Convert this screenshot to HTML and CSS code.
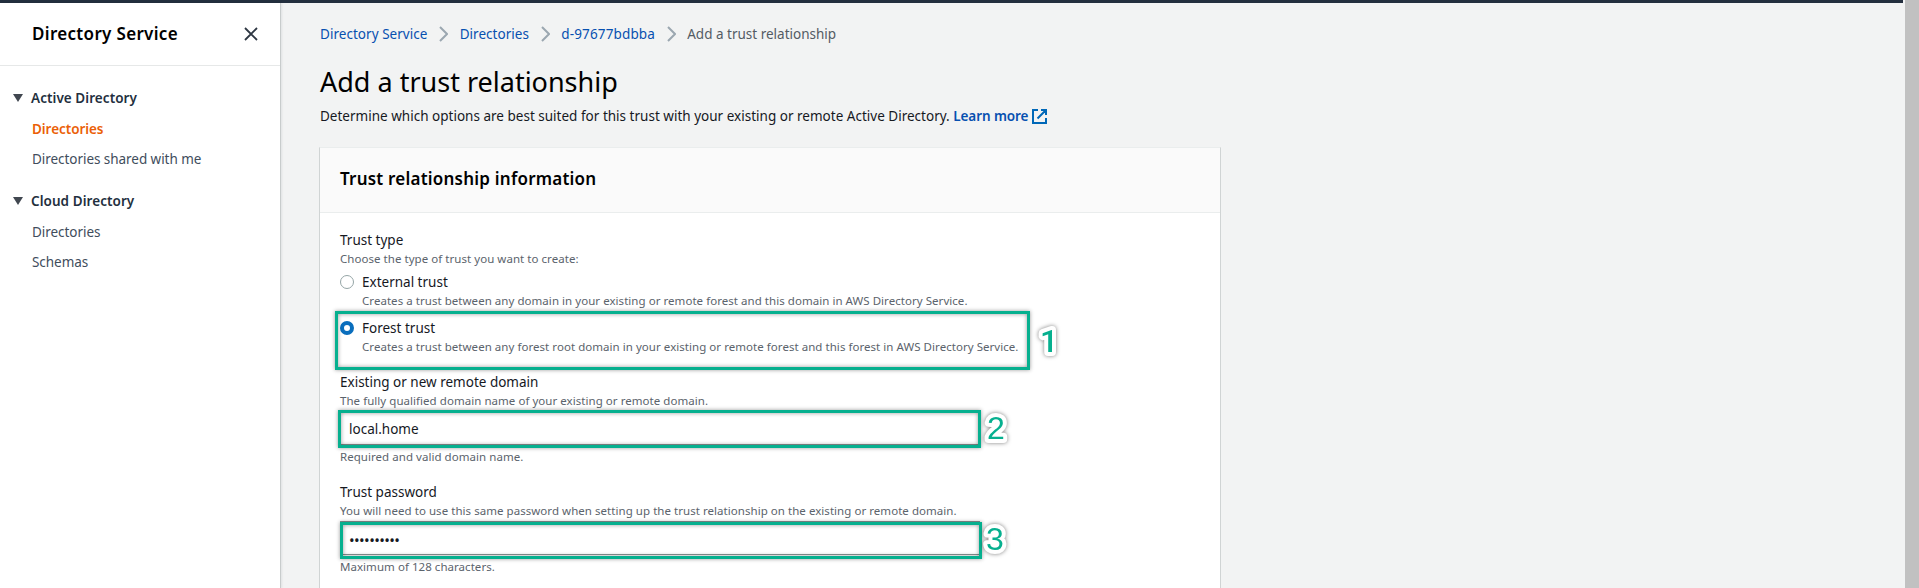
FILE: index.html
```html
<!DOCTYPE html>
<html lang="en">
<head>
<meta charset="utf-8">
<title>Add a trust relationship</title>
<link rel="stylesheet" href="styles.css">
</head>
<body>
<div class="window">
  <div class="page">
    <div class="topbar"></div>
    <div class="columns">
      <aside class="sidebar">
        <header class="sidebar-head">
          <h2 class="sidebar-title">Directory Service</h2>
          <svg class="close" width="14" height="14" viewBox="0 0 14 14"><path d="M1 1L13 13M13 1L1 13"/></svg>
        </header>
        <nav class="nav">
          <section class="nav-group">
            <h3 class="nav-heading"><svg class="caret" width="10" height="8" viewBox="0 0 10 8"><path d="M0 0H10L5 8Z"/></svg>Active Directory</h3>
            <a class="nav-link nav-link-current">Directories</a>
            <a class="nav-link">Directories shared with me</a>
          </section>
          <section class="nav-group">
            <h3 class="nav-heading"><svg class="caret" width="10" height="8" viewBox="0 0 10 8"><path d="M0 0H10L5 8Z"/></svg>Cloud Directory</h3>
            <a class="nav-link">Directories</a>
            <a class="nav-link">Schemas</a>
          </section>
        </nav>
      </aside>
      <main class="main">
        <div class="breadcrumb">
          <a class="crumb">Directory Service</a>
          <svg class="chevron" width="9" height="16" viewBox="0 0 9 16"><path d="M1 1L8 8L1 15"/></svg>
          <a class="crumb">Directories</a>
          <svg class="chevron" width="9" height="16" viewBox="0 0 9 16"><path d="M1 1L8 8L1 15"/></svg>
          <a class="crumb crumb-id">d-97677bdbba</a>
          <svg class="chevron" width="9" height="16" viewBox="0 0 9 16"><path d="M1 1L8 8L1 15"/></svg>
          <span class="crumb-current">Add a trust relationship</span>
        </div>
        <h1 class="title">Add a trust relationship</h1>
        <p class="lead">Determine which options are best suited for this trust with your existing or remote Active Directory. <a class="learn">Learn more<svg class="external" width="15" height="15" viewBox="0 0 15 15"><path d="M6 1H1V14H14V9M9 1H14V6M14 1L5.5 9.5"/></svg></a></p>
        <section class="card">
          <header class="card-head"><h2 class="card-title">Trust relationship information</h2></header>
          <div class="card-body">
            <div class="field">
              <div class="label">Trust type</div>
              <div class="hint">Choose the type of trust you want to create:</div>
              <div class="option">
                <span class="radio"></span>
                <div><div class="label">External trust</div>
                <div class="hint">Creates a trust between any domain in your existing or remote forest and this domain in AWS Directory Service.</div></div>
              </div>
              <div class="option option-forest">
                <span class="radio radio-on"></span>
                <div><div class="label">Forest trust</div>
                <div class="hint">Creates a trust between any forest root domain in your existing or remote forest and this forest in AWS Directory Service.</div></div>
                <span class="frame frame-one"></span>
                <svg class="mark mark-one" width="34" height="42"><text x="8" y="32">1</text></svg>
              </div>
            </div>
            <div class="field">
              <div class="label">Existing or new remote domain</div>
              <div class="hint">The fully qualified domain name of your existing or remote domain.</div>
              <div class="input">local.home<span class="frame frame-two"></span>
                <svg class="mark mark-two" width="34" height="42"><text x="8" y="32">2</text></svg></div>
              <div class="hint">Required and valid domain name.</div>
            </div>
            <div class="field">
              <div class="label">Trust password</div>
              <div class="hint">You will need to use this same password when setting up the trust relationship on the existing or remote domain.</div>
              <div class="input"><span class="dots">••••••••••</span><span class="frame frame-three"></span>
                <svg class="mark mark-three" width="34" height="42"><text x="8" y="32">3</text></svg></div>
              <div class="hint">Maximum of 128 characters.</div>
            </div>
          </div>
        </section>
      </main>
    </div>
  </div>
  <div class="scrollbar"></div>
</div>
</body>
</html>
```
FILE: styles.css
```css
* { box-sizing: border-box; }
body {
  margin: 0;
  font: 13.5px/22px "Noto Sans", sans-serif;
  color: #16191f;
}
h1, h2, h3, p { margin: 0; }
.window {
  display: flex;
  height: 588px;
  overflow: hidden;
  background: #f2f3f3;
}
.page { flex: 1; display: flex; flex-direction: column; min-width: 0; }
.topbar { height: 3px; margin-right: 2px; background: #232f3e; flex: none; }
.scrollbar { width: 14px; background: #c1c1c1; }
.columns { display: flex; flex: 1; min-height: 0; }

.sidebar {
  width: 281px;
  flex: none;
  background: #fff;
  border-right: 1px solid #c8cccc;
  box-shadow: 1px 0 2px rgba(0, 28, 36, .08);
}
.sidebar-head {
  display: flex;
  align-items: center;
  justify-content: space-between;
  height: 63px;
  padding: 0 22px 0 32px;
  border-bottom: 1px solid #e6e8e8;
}
.sidebar-title, .card-title {
  font-size: 17px;
  font-weight: 600;
  letter-spacing: .22px;
  color: #000;
}
.sidebar-title { letter-spacing: .32px; }
.close { fill: none; stroke: #2d3642; stroke-width: 1.8; }
.nav { padding: 17px 0 0 13px; }
.nav-group { display: flex; flex-direction: column; margin-bottom: 13px; }
.nav-heading {
  display: flex;
  align-items: center;
  gap: 8px;
  height: 30px;
  font-size: 13.5px;
  font-weight: 600;
  letter-spacing: .06px;
  color: #232f3e;
}
.caret { fill: #414750; }
.nav-link {
  height: 30px;
  line-height: 32px;
  padding-left: 19px;
  letter-spacing: -.05px;
  color: #414d5c;
}
.nav-link-current { font-weight: 600; color: #eb5f07; }

.main { padding: 20px 0 0 39px; }
.breadcrumb { display: flex; align-items: center; gap: 11.6px; height: 22px; }
.crumb { color: #0750b0; letter-spacing: .04px; }
.crumb-id { letter-spacing: .15px; }
.crumb-current { color: #545b64; }
.chevron { fill: none; stroke: #9ba7b0; stroke-width: 2; }
.title {
  margin: 19px 0 0;
  font-size: 27px;
  line-height: 36px;
  font-weight: 400;
  color: #000;
}
.lead { margin: 5px 0 0; letter-spacing: .01px; }
.learn { color: #0750b0; font-weight: 600; letter-spacing: -.08px; }
.external {
  margin-left: 4px;
  vertical-align: -3px;
  fill: none;
  stroke: #0068b8;
  stroke-width: 2;
}

.card {
  width: 902px;
  margin: 20px 0 0 -1px;
  height: 500px;
  background: #fff;
  border: 1px solid #d0d4d4;
  border-top-color: #eaeded;
}
.card-head {
  display: flex;
  align-items: center;
  height: 65px;
  padding: 0 0 2px 20px;
  background: #fafafa;
  border-bottom: 1px solid #eaeded;
}
.card-body { padding: 16px 20px; }
.field { margin-bottom: 16px; }
.label { line-height: 22px; }
.hint { font-size: 11.5px; line-height: 16px; letter-spacing: .045px; color: #5b636c; }
.option { position: relative; display: flex; gap: 8px; margin-top: 4px; }
.option-forest { margin-top: 8px; }
.radio {
  width: 14px;
  height: 14px;
  margin-top: 4px;
  border: 1px solid #95a5a6;
  border-radius: 50%;
  background: #fff;
}
.radio-on { border: 4px solid #0a6ebd; }
.input {
  position: relative;
  width: 640px;
  height: 34px;
  margin: 2px 0 4px;
  padding-left: 8px;
  line-height: 34px;
  border: 1px solid #8a9494;
}
.dots {
  display: inline-block;
  font-size: 15px;
  letter-spacing: -.6px;
  line-height: 36px;
}

/* Numbered callouts drawn over the form */
.frame {
  position: absolute;
  border: 3px solid #06b08f;
  box-shadow: 0 0 4px rgba(0, 0, 0, .4), inset 0 0 4px rgba(0, 0, 0, .4);
}
.frame-one { left: -5px; top: -6px; width: 695px; height: 59px; }
.frame-two { left: -3px; top: -2px; width: 643px; height: 38px; }
.frame-three { left: -1px; top: 0; width: 642px; height: 37px; }
.mark {
  position: absolute;
  overflow: visible;
  font: 32px "Liberation Sans", Arial, sans-serif;
  fill: #06b08f;
  stroke: #fff;
  stroke-width: 8px;
  stroke-linejoin: round;
  paint-order: stroke fill;
  filter: drop-shadow(0 0 2px rgba(0, 0, 0, .5));
}
.mark-one { left: 692px; top: 3px; font-family: Roboto, sans-serif; font-weight: 500; }
.mark-two { left: 638px; top: -5px; }
.mark-three { left: 637px; top: -4px; }
```
